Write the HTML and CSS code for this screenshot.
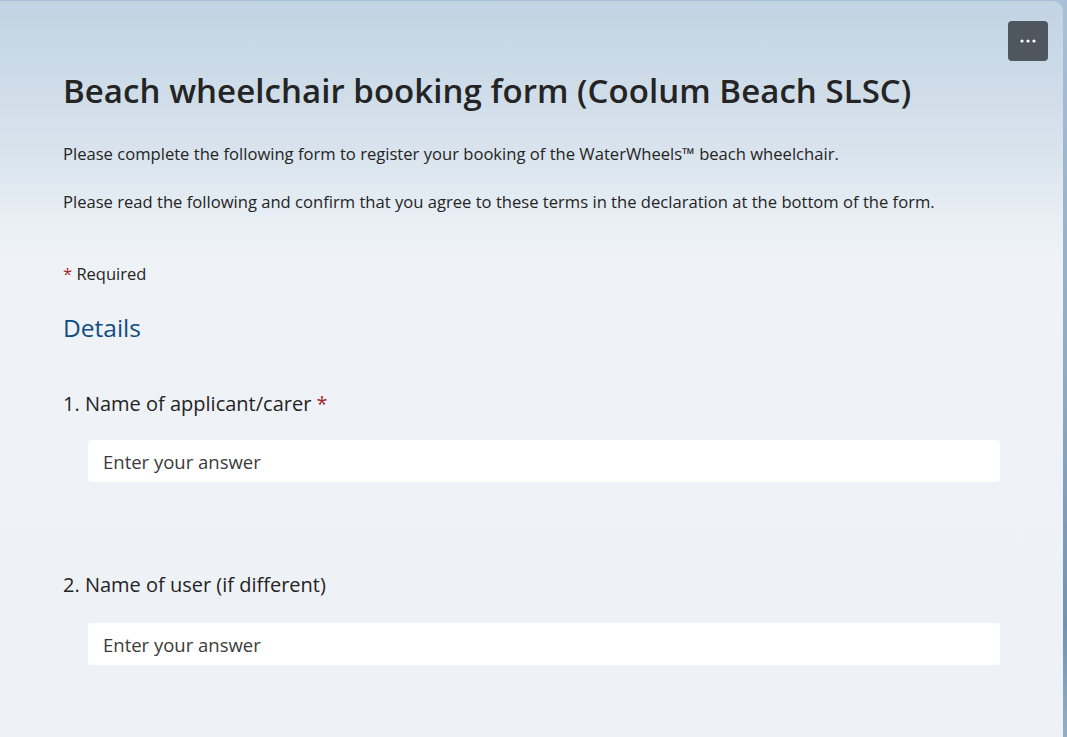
FILE: index.html
```html
<!DOCTYPE html>
<html lang="en">
<head>
<meta charset="utf-8">
<title>Beach wheelchair booking form</title>
<link rel="stylesheet" href="styles.css">
</head>
<body>
<div class="backdrop">
  <main class="card">
    <button class="more" aria-label="More options">
      <svg width="16" height="4" viewBox="0 0 16 4"><circle cx="2" cy="2" r="1.6" fill="#fff"/><circle cx="8" cy="2" r="1.6" fill="#fff"/><circle cx="14" cy="2" r="1.6" fill="#fff"/></svg>
    </button>
    <header class="form-header">
      <h1 class="title">Beach wheelchair booking form (Coolum Beach SLSC)</h1>
      <p class="desc">Please complete the following form to register your booking of the WaterWheels™ beach wheelchair.</p>
      <p class="desc">Please read the following and confirm that you agree to these terms in the declaration at the bottom of the form.</p>
    </header>
    <p class="required-note"><span class="star">*</span> Required</p>
    <h2 class="section">Details</h2>
    <div class="question first">
      <div class="q-label">1. Name of applicant/carer <span class="star">*</span></div>
      <div class="answer">Enter your answer</div>
    </div>
    <div class="question">
      <div class="q-label">2. Name of user (if different)</div>
      <div class="answer">Enter your answer</div>
    </div>
  </main>
</div>
</body>
</html>
```
FILE: styles.css
```css
html, body {
  margin: 0;
  padding: 0;
  height: 100%;
  overflow: hidden;
}
body {
  font-family: "Open Sans", "Noto Sans", sans-serif;
  color: #242424;
}
.backdrop {
  height: 100%;
  background: linear-gradient(180deg, #a9c0d6 0%, #8eaac6 50%, #6f93b6 85%, #8fb0c9 100%);
  padding-top: 1px;
  box-sizing: border-box;
}
.card {
  position: relative;
  width: 1063px;
  height: 100%;
  box-sizing: border-box;
  border-top-right-radius: 10px;
  background: linear-gradient(180deg, #c2d3e3 0%, #d8e3ed 20%, #e9eff5 30%, #eff3f7 36%, #eef2f6 100%);
  padding: 63px 63px 0 63px;
}
.more {
  position: absolute;
  top: 20px;
  right: 15px;
  width: 40px;
  height: 40px;
  border: 0;
  border-radius: 4px;
  background: #4f565e;
  display: flex;
  align-items: center;
  justify-content: center;
  padding: 0;
}
.title {
  margin: 0;
  font-size: 33px;
  line-height: 54px;
  font-weight: 600;
  letter-spacing: 0.05px;
  color: #242424;
}
.desc {
  margin: 25px 0 0;
  font-size: 16.6px;
  line-height: 22px;
}
.desc + .desc {
  margin-top: 26px;
}
.required-note {
  margin: 50px 0 0;
  font-size: 16.5px;
  line-height: 22px;
}
.star { color: #a4262c; }
.section {
  margin: 27px 0 0;
  font-size: 24.5px;
  font-weight: 400;
  line-height: 32px;
  color: #0f4c81;
}
.question { margin-top: 47px; }
.question + .question { margin-top: 90px; }
.q-label {
  font-size: 20px;
  line-height: 26px;
}
.answer {
  margin: 25px 0 0 25px;
  width: 912px;
  height: 42px;
  box-sizing: border-box;
  background: #fff;
  border-radius: 4px;
  padding: 0 15px;
  display: flex;
  align-items: center;
  font-size: 18.5px;
  color: #3b3b3b;
}
.question.first .answer { margin-top: 23px; }
```
